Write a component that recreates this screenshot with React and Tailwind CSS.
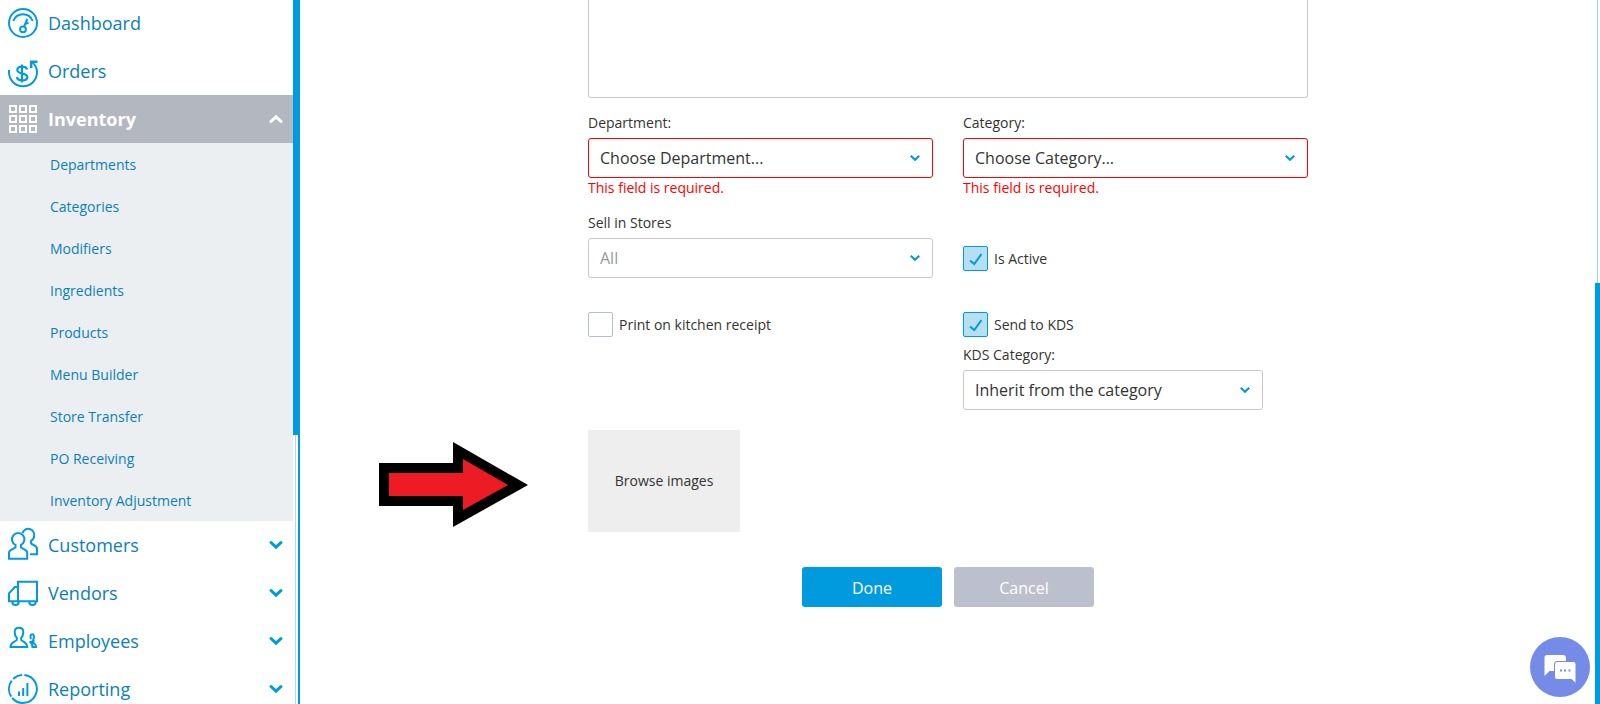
import React, { useState } from 'react'

const stroke = {
  fill: 'none',
  stroke: 'currentColor',
  strokeWidth: 2,
}

function Icon({ children }) {
  return (
    <svg viewBox="0 0 30 30" className="size-[30px] shrink-0 overflow-visible" aria-hidden="true" {...stroke}>
      {children}
    </svg>
  )
}

const icons = {
  dashboard: (
    <Icon>
      <circle cx="15" cy="15" r="14" />
      <path d="M5.300 13C7 8.600 10.700 6.300 15 6.300s8 2.300 9.700 6.700" />
      <circle cx="15" cy="21.300" r="2.900" />
      <path d="M16 18.600l3.300-7.600M17 16.500l3.500-2" />
    </Icon>
  ),
  orders: (
    <Icon>
      <path d="M1 14v2.300a14 14 0 0 0 28 0c0-4.300-1.800-8-5.500-10.300" />
      <path d="M29.500 5.800H23.200V12" strokeWidth="2.400" />
      <path d="M14 8.500v18M19 13.500c-.4-2-2-2.800-4.800-2.800-3 0-4.900 1.200-4.900 3.400 0 5 10 2 10 6.800 0 2.300-2 3.500-5 3.500-3.200 0-5.100-1.100-5.400-3.400" strokeWidth="2.200" />
    </Icon>
  ),
  inventory: (
    <Icon>
      {[2, 12, 22].map((y) =>
        [2, 12, 22].map((x) => <rect key={`${x}-${y}`} x={x} y={y} width="6" height="6" />)
      )}
    </Icon>
  ),
  customers: (
    <Icon>
      <path d="M7.500 17.300v-2.400a6.200 6.200 0 1 1 5.400 0v2.400c1.500 1.700 6.100 2 6.300 5.200v6.300H1v-6.300c.2-3.200 5-3.500 6.500-5.200z" />
      <path d="M14.500 3.200a6 6 0 0 1 11.700 2.600c0 2.200-1 3.700-3.100 5v2.600c1.200 1.800 5.800 2 5.900 5.200v5.700h-7" />
    </Icon>
  ),
  vendors: (
    <Icon>
      <path d="M10 23.300V3.800h19v19.500H1v-8L6.800 9H10" />
      <path d="M4.300 23.500c0 4.800 6.400 4.800 6.400 0M21.300 23.500c0 4.800 6.400 4.800 6.400 0" />
    </Icon>
  ),
  employees: (
    <Icon>
      <path d="M8.800 12C7.300 10.500 6.700 8 6.700 6c0-2.800 1.600-4.300 4.300-4.300S15.300 3.200 15.300 6c0 2-.6 4.500-2.100 6v2c1.200 1.700 5.800 2 6 7H2.500c.2-5 5-5.300 6.300-7z" />
      <path d="M23 13.200c-1-2.700-.6-4.900 1.200-4.900s2.300 2.500 1.200 5.100l-1.700 2.800M21.500 15.500c2 1 3 2.500 3 5.500h3.700c0-2.500-1-3-2.700-4v-3.300" />
    </Icon>
  ),
  reporting: (
    <Icon>
      <path d="M16.300 1A14 14 0 1 1 4.200 24M3.200 22.600A14 14 0 0 1 3.700 6.700M5.200 5A14 14 0 0 1 14.200 1" />
      <path d="M11 17.500V22M15.200 14v8M19.400 9v13" />
    </Icon>
  ),
}

function Chevron({ up }) {
  return (
    <svg
      viewBox="0 0 14 10"
      className="h-[10px] w-[14px] shrink-0"
      fill="none"
      stroke="currentColor"
      strokeWidth="3"
      strokeLinecap="round"
      aria-hidden="true"
    >
      <path d={up ? 'M2 7.500L7 2.800 12 7.500' : 'M2 2.500L7 7.200 12 2.500'} />
    </svg>
  )
}

const inventoryLinks = [
  'Departments',
  'Categories',
  'Modifiers',
  'Ingredients',
  'Products',
  'Menu Builder',
  'Store Transfer',
  'PO Receiving',
  'Inventory Adjustment',
]

function NavItem({ icon, label, expandable }) {
  return (
    <a href="#" className="flex h-12 items-center gap-[10px] pl-2 pr-[10px] text-lg text-[#0b80b8]">
      <span className="text-[#009bdf]">{icons[icon]}</span>
      <span className="flex-1">{label}</span>
      {expandable && (
        <span className="text-[#009bdf]">
          <Chevron />
        </span>
      )}
    </a>
  )
}

function Sidebar() {
  return (
    <aside className="flex w-[300px] shrink-0 border-r-2 border-[#009bdf]">
      <nav className="-mt-px w-[293px] shrink-0">
        <NavItem icon="dashboard" label="Dashboard" />
        <NavItem icon="orders" label="Orders" />
        <a href="#" className="flex h-12 items-center gap-[10px] bg-[#b3b7c0] pl-2 pr-[10px] text-lg font-bold text-white">
          {icons.inventory}
          <span className="flex-1">Inventory</span>
          <Chevron up />
        </a>
        <ul className="bg-[#ebeff2]">
          {inventoryLinks.map((label) => (
            <li key={label}>
              <a href="#" className="flex h-[42px] items-center pl-[50px] pt-0.5 text-sm text-[#0b80b8]">
                {label}
              </a>
            </li>
          ))}
        </ul>
        <NavItem icon="customers" label="Customers" expandable />
        <NavItem icon="vendors" label="Vendors" expandable />
        <NavItem icon="employees" label="Employees" expandable />
        <NavItem icon="reporting" label="Reporting" expandable />
      </nav>
      {/* Scroll rail */}
      <div className="flex w-[5px] flex-col items-center">
        <div className="h-[435px] w-full bg-[#009bdf]" />
        <div className="w-px flex-1 bg-[#b2d9f0]" />
      </div>
    </aside>
  )
}

function SelectBox({ id, label, options, error, muted }) {
  return (
    <div>
      <label htmlFor={id} className="mb-[5px] block">{label}</label>
      <div className="grid items-center">
        <select
          id={id}
          className={`col-start-1 row-start-1 h-10 w-full appearance-none rounded-[3px] border bg-white pl-[11px] pr-8 text-base ${
            error ? 'border-[#f00]' : 'border-[#c8c8c8]'
          } ${muted ? 'text-[#999]' : 'text-[#333]'}`}
        >
          {options.map((option) => (
            <option key={option}>{option}</option>
          ))}
        </select>
        <svg
          viewBox="0 0 10 8"
          className="pointer-events-none col-start-1 row-start-1 mr-[13px] h-2 w-[10px] justify-self-end text-[#009bdf]"
          fill="none"
          stroke="currentColor"
          strokeWidth="2.200"
          aria-hidden="true"
        >
          <path d="M.8 1.800L5 5.800l4.200-4" />
        </svg>
      </div>
      {error && <p className="text-[#f00]">{error}</p>}
    </div>
  )
}

function CheckBox({ label, defaultChecked = false }) {
  const [checked, setChecked] = useState(defaultChecked)

  return (
    <label className="flex items-center gap-1.5">
      <span className="grid place-items-center">
        <input
          type="checkbox"
          checked={checked}
          onChange={(e) => setChecked(e.target.checked)}
          className="col-start-1 row-start-1 size-[25px] appearance-none rounded-[2px] border border-[#b9bcd0] bg-white checked:border-[#009bdf] checked:bg-[#b5e0f3]"
        />
        {checked && (
          <svg viewBox="0 0 14 14" className="pointer-events-none col-start-1 row-start-1 size-[14px]" fill="none" stroke="#009bdf" strokeWidth="2" aria-hidden="true">
            <path d="M1 8.500l4.300 3.500L12.500 2" />
          </svg>
        )}
      </span>
      {label}
    </label>
  )
}

function ProductForm() {
  return (
    <form className="mx-auto w-full max-w-[720px]" onSubmit={(e) => e.preventDefault()}>
      <textarea
        aria-label="Description"
        className="block h-[98px] w-full resize-none rounded-b-[3px] border border-t-0 border-[#c8c8c8] px-3"
      />

      <div className="mt-[15px] grid grid-cols-2 gap-x-[30px]">
        <SelectBox id="department" label="Department:" options={['Choose Department...']} error="This field is required." />
        <SelectBox id="category" label="Category:" options={['Choose Category...']} error="This field is required." />
      </div>

      <div className="mt-[15px] grid grid-cols-2 gap-x-[30px]">
        <SelectBox id="stores" label="Sell in Stores" options={['All']} muted />
        <div className="pt-[33px]">
          <CheckBox label="Is Active" defaultChecked />
        </div>
      </div>

      <div className="mt-[34px] grid grid-cols-2 items-start gap-x-[30px]">
        <CheckBox label="Print on kitchen receipt" />
        <div className="flex flex-col gap-2">
          <CheckBox label="Send to KDS" defaultChecked />
          <div className="w-[300px]">
            <SelectBox id="kds-category" label="KDS Category:" options={['Inherit from the category']} />
          </div>
        </div>
      </div>

      <div className="relative mt-5">
        <button type="button" className="block h-[102px] w-[152px] bg-[#eee]">
          Browse images
        </button>
        {/* Pointer to the image picker */}
        <svg viewBox="0 0 149 86" className="absolute -left-[209px] top-3 h-[86px] w-[149px]" aria-hidden="true">
          <path d="M0 21h74V0l75 43-75 42V64H0z" fill="#000" />
          <path d="M10 31h74V17l45 26-45 25V54H10z" fill="#ed1c24" />
        </svg>
      </div>

      <div className="mt-[35px] flex justify-center gap-3 text-base text-white">
        <button type="submit" className="h-10 w-[140px] rounded-[3px] bg-[#009bdf] pt-0.5">Done</button>
        <button type="button" className="h-10 w-[140px] rounded-[3px] bg-[#bbc0cc] pt-0.5">Cancel</button>
      </div>
    </form>
  )
}

function ChatButton() {
  return (
    <button
      type="button"
      aria-label="Open chat"
      className="fixed bottom-[7px] right-[10px] size-[60px] rounded-full bg-[#758be8]"
    >
      <svg viewBox="0 0 60 60" className="size-[60px]" aria-hidden="true">
        <path d="M17 18h16q3 0 3 3v13H19.500L14.500 39V20.500Q14.500 18 17 18z" fill="#fff" />
        <path d="M27 24.500h16.500q2.500 0 2.500 2.500v19.500L41.500 42.500H27q-2.500 0-2.500-2.500V27q0-2.500 2.500-2.500z" fill="#fff" stroke="#758be8" strokeWidth="1" />
        <path d="M30 33.500h2M34 33.500h2M38.500 33.500h2" stroke="#758be8" strokeWidth="2" />
      </svg>
    </button>
  )
}

export default function App() {
  return (
    <div className="flex h-screen overflow-hidden bg-white font-['Open_Sans',sans-serif] text-sm text-[#333]">
      <Sidebar />
      <main className="min-w-0 flex-1 pl-px">
        <ProductForm />
      </main>
      {/* Page scroll rail */}
      <div className="flex w-[5px] shrink-0 flex-col items-center">
        <div className="h-[283px] w-px bg-[#99d7f2]" />
        <div className="w-full flex-1 bg-[#009bdf]" />
      </div>
      <ChatButton />
    </div>
  )
}
